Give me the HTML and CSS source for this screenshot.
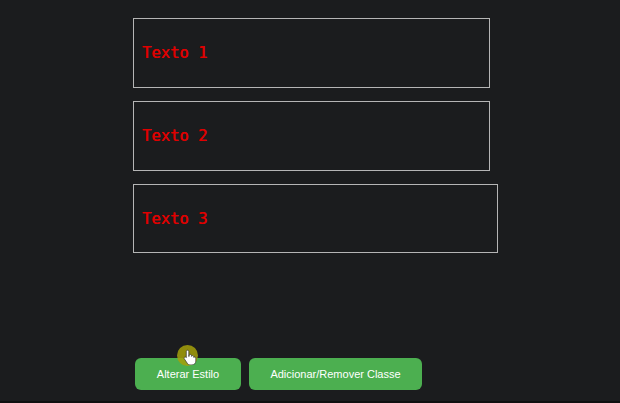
FILE: index.html
```html
<!DOCTYPE html>
<html>
<head>
<meta charset="utf-8">
<link rel="stylesheet" href="styles.css">
</head>
<body>
<div class="page">
  <div class="box box-a">Texto 1</div>
  <div class="box box-a">Texto 2</div>
  <div class="box box-b">Texto 3</div>
  <div class="actions">
    <button class="btn btn-1">Alterar Estilo</button>
    <button class="btn btn-2">Adicionar/Remover Classe</button>
    <span class="cursor">
      <svg width="14" height="16" viewBox="0 0 14 16"><path d="M4.5 1.2c.8 0 1.3.6 1.3 1.3v5l.3-.1V6.6c0-.7.6-1.2 1.2-1.2s1.2.5 1.2 1.2v.8c.2-.5.6-.8 1.1-.8.7 0 1.2.5 1.2 1.2v.7c.2-.3.5-.5.9-.5.6 0 1.1.5 1.1 1.1v3c0 2.1-1.5 3.8-3.8 3.8H7.1c-1.2 0-2.1-.6-2.8-1.6L1.3 9.8c-.4-.6-.2-1.3.4-1.6.5-.3 1.1-.2 1.5.3l.1.2V2.5c0-.7.5-1.3 1.2-1.3z" fill="#fff" stroke="#333" stroke-width=".7"/></svg>
    </span>
  </div>
</div>
</body>
</html>
```

FILE: styles.css
```css
html, body {
  margin: 0;
  padding: 0;
  background: #1b1c1e;
  height: 100%;
}
body {
  overflow: hidden;
  border-bottom: 2px solid #0f1011;
  box-sizing: border-box;
}
.page {
  padding: 18px 0 0 133px;
}
.box {
  box-sizing: border-box;
  height: 70px;
  border: 1px solid #b5b5b5;
  padding: 0 8px;
  display: flex;
  align-items: center;
  font-family: "DejaVu Sans Mono", monospace;
  font-size: 15.5px;
  color: #e00000;
  text-shadow: 0.4px 0 0 #e00000;
  margin-bottom: 13px;
}
.box-a { width: 357px; }
.box-b { width: 365px; height: 69px; }
.actions {
  position: relative;
  display: flex;
  gap: 8px;
  margin-top: 105px;
  margin-left: 2px;
}
.btn {
  height: 32px;
  border: none;
  border-radius: 6px;
  background: #4caf50;
  color: #fff;
  font-family: "Liberation Sans", Arial, sans-serif;
  font-size: 11px;
  padding: 0;
}
.btn-1 { width: 106px; }
.btn-2 { width: 173px; }
.cursor {
  position: absolute;
  left: 42px;
  top: -13px;
  width: 21px;
  height: 21px;
  border-radius: 50%;
  background: rgba(165, 160, 10, 0.85);
  display: flex;
  align-items: center;
  justify-content: center;
}
.cursor svg { margin-left: 4px; margin-top: 3px; }
```
